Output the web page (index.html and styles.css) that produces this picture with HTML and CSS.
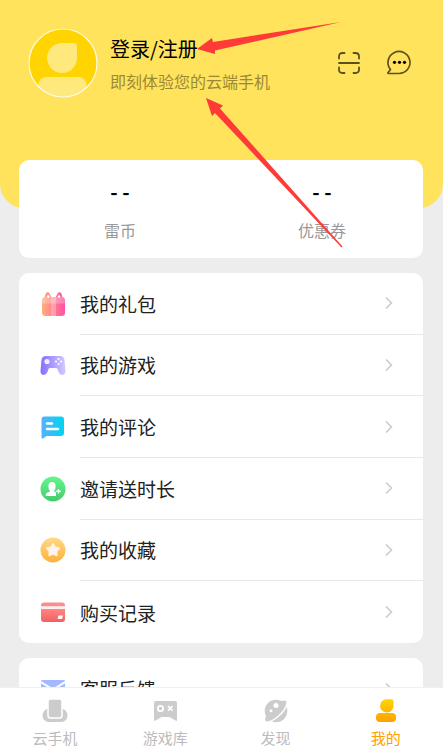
FILE: index.html
```html
<!DOCTYPE html>
<html lang="zh-CN">
<head>
<meta charset="utf-8">
<meta name="viewport" content="width=device-width, initial-scale=1">
<title>我的</title>
<link rel="stylesheet" href="styles.css">
</head>
<body>
<main class="content">
  <header class="profile">
    <svg class="avatar" viewBox="0 0 70 70" aria-hidden="true">
      <defs><clipPath id="face"><circle cx="35" cy="35" r="34"/></clipPath></defs>
      <circle cx="35" cy="35" r="34" fill="#ffd400"/>
      <g clip-path="url(#face)" fill="#ffe87c">
        <path d="M33 15H46Q49 15 49 18V30A15 15 0 1 1 33 15Z"/>
        <rect x="10.500" y="49" width="48" height="30" rx="8"/>
      </g>
      <circle cx="35" cy="35" r="34" fill="none" stroke="#fffbe5" stroke-width="1.2"/>
    </svg>
    <a class="login" href="#login">
      <span class="login-title">登录/注册</span>
      <span class="login-note">即刻体验您的云端手机</span>
    </a>
    <div class="tools">
      <button class="tool" type="button" aria-label="扫一扫">
        <svg viewBox="0 0 24 24" fill="none" stroke="#5c5020" stroke-width="1.8" stroke-linecap="round"><path d="M2 7.500V5.500Q2 2 5.500 2H7.500M16.500 2H18.500Q22 2 22 5.500V7.500M22 16.500V18.500Q22 22 18.500 22H16.500M7.500 22H5.500Q2 22 2 18.500V16.500M2 12H22"/></svg>
      </button>
      <button class="tool" type="button" aria-label="消息">
        <svg viewBox="0 0 24 24"><path d="M12 22.500H1.500Q.5 22.500 1.100 21.500L3.500 18.500A11 11 0 1 1 12 22.500Z" fill="none" stroke="#5c5020" stroke-width="1.700" stroke-linejoin="round"/><g fill="#000"><circle cx="7.500" cy="11.300" r="1.600"/><circle cx="12.500" cy="11.300" r="1.600"/><circle cx="17.500" cy="11.300" r="1.600"/></g></svg>
      </button>
    </div>
  </header>

  <section class="card wallet">
    <a class="balance" href="#coins"><span class="amount">- -</span><span class="unit">雷币</span></a>
    <a class="balance" href="#coupons"><span class="amount">- -</span><span class="unit">优惠券</span></a>
  </section>

  <nav class="card menu">
    <a class="row" href="#gifts">
      <svg class="row-icon" viewBox="0 0 26 26" aria-hidden="true">
        <defs><linearGradient id="gift" x1="2" x2="25" gradientUnits="userSpaceOnUse"><stop stop-color="#ffb07b"/><stop offset="1" stop-color="#ff4fa8"/></linearGradient></defs>
        <path d="M4.500 8Q5 1 8 1Q9.500 1 11.500 7V8ZM15.500 8V7Q17.500 1 19.500 1Q22 1 22.500 8Z" fill="url(#gift)"/>
        <rect x="2" y="6" width="23" height="19" rx="3.500" fill="url(#gift)"/>
        <path d="M2 12.500V9.500Q2 6 5.500 6H21.500Q25 6 25 9.500V12.500Z" fill="#fff" opacity=".25"/>
        <path d="M11 6H16V25H11Z" fill="#fff" opacity=".25"/>
        <circle cx="8.300" cy="5.500" r="1.200" fill="#fff"/><circle cx="19" cy="5.500" r="1.200" fill="#fff"/>
      </svg>
      <span class="row-body">我的礼包<svg class="chevron" viewBox="0 0 8 14"><path d="M1 1.500L6.500 7L1 12.500"/></svg></span>
    </a>
    <a class="row" href="#games">
      <svg class="row-icon" viewBox="0 0 26 26" aria-hidden="true">
        <defs><linearGradient id="pad"><stop stop-color="#8370ff"/><stop offset="1" stop-color="#d5c9ff"/></linearGradient></defs>
        <path d="M6 4H20Q24 4 24.500 8L25.500 19Q25.500 23 22 23Q20 23 18.500 20L17.500 17Q17 16 16 16H10Q9 16 8.500 17L7.500 20Q6 23 4 23Q.5 23 .5 19L1.500 8Q2 4 6 4Z" fill="url(#pad)"/>
        <circle cx="7" cy="9.500" r="2.600" fill="#f1edff"/>
        <g fill="#fff"><circle cx="18.500" cy="7" r="1.100"/><circle cx="18.500" cy="12" r="1.100"/><circle cx="16" cy="9.500" r="1.100"/><circle cx="21" cy="9.500" r="1.100"/></g>
      </svg>
      <span class="row-body">我的游戏<svg class="chevron" viewBox="0 0 8 14"><path d="M1 1.500L6.500 7L1 12.500"/></svg></span>
    </a>
    <a class="row" href="#comments">
      <svg class="row-icon" viewBox="0 0 26 26" aria-hidden="true">
        <defs><linearGradient id="chat"><stop stop-color="#55b1ff"/><stop offset="1" stop-color="#00d5ef"/></linearGradient></defs>
        <path d="M4.500 2.500H21Q24 2.500 24 5.500V19Q24 22 21 22H6.500L3 24.500Q1.500 25 1.500 23V5.500Q1.500 2.500 4.500 2.500Z" fill="url(#chat)"/>
        <path d="M7 9.500H12M7 15H18" stroke="#fff" stroke-width="2.400" stroke-linecap="round"/>
      </svg>
      <span class="row-body">我的评论<svg class="chevron" viewBox="0 0 8 14"><path d="M1 1.500L6.500 7L1 12.500"/></svg></span>
    </a>
    <a class="row" href="#invite">
      <svg class="row-icon" viewBox="0 0 26 26" aria-hidden="true">
        <defs><linearGradient id="invite" x2="0" y2="1"><stop stop-color="#64f78d"/><stop offset="1" stop-color="#43cb6b"/></linearGradient></defs>
        <circle cx="13" cy="13" r="12.500" fill="url(#invite)"/>
        <rect x="8.500" y="6" width="7" height="9" rx="3.500" fill="#fff"/>
        <path d="M10 13H14V15L16 16V20H5.500Q5.500 17 8 16.300L10 15.500Z" fill="#fff"/>
        <path d="M18.500 12.500V18M15.700 15.300H21.300" stroke="#4fd979" stroke-width="3.500"/>
        <path d="M18.500 13V17.500M16.200 15.300H20.800" stroke="#fff" stroke-width="1.500"/>
      </svg>
      <span class="row-body">邀请送时长<svg class="chevron" viewBox="0 0 8 14"><path d="M1 1.500L6.500 7L1 12.500"/></svg></span>
    </a>
    <a class="row" href="#favorites">
      <svg class="row-icon" viewBox="0 0 26 26" aria-hidden="true">
        <defs><linearGradient id="star" x2="0" y2="1"><stop stop-color="#ffd987"/><stop offset="1" stop-color="#ffb03c"/></linearGradient></defs>
        <circle cx="13" cy="13" r="12.500" fill="url(#star)"/>
        <path d="M13 7L15 10.500L19 11.300L16.300 14.300L16.700 18.300L13 16.700L9.300 18.300L9.700 14.300L7 11.300L11 10.500Z" fill="#fff3ea" stroke="#fff3ea" stroke-width="2" stroke-linejoin="round"/>
      </svg>
      <span class="row-body">我的收藏<svg class="chevron" viewBox="0 0 8 14"><path d="M1 1.500L6.500 7L1 12.500"/></svg></span>
    </a>
    <a class="row" href="#purchases">
      <svg class="row-icon" viewBox="0 0 26 26" aria-hidden="true">
        <defs><linearGradient id="bill" x2="0" y2="1"><stop stop-color="#ff8686"/><stop offset="1" stop-color="#f16060"/></linearGradient></defs>
        <path d="M1 7.500V6.500Q1 3.500 4 3.500H22Q25 3.500 25 6.500V7.500Z" fill="#ff8c8c"/>
        <path d="M1 10H25V20Q25 23 22 23H4Q1 23 1 20Z" fill="url(#bill)"/>
        <path d="M1 7.500H25V10H1Z" fill="#fff0f0"/>
        <path d="M18.500 16.500H23L22 20H17.500Z" fill="#fff"/>
      </svg>
      <span class="row-body">购买记录<svg class="chevron" viewBox="0 0 8 14"><path d="M1 1.500L6.500 7L1 12.500"/></svg></span>
    </a>
  </nav>

  <nav class="card support">
    <a class="row" href="#feedback">
      <svg class="row-icon" viewBox="0 0 26 26" aria-hidden="true">
        <rect x="1" y="4" width="24" height="19" rx="1" fill="#a4b8ff"/>
        <path d="M0 5.500L13 13.500L26 5.500" fill="none" stroke="#fff" stroke-width="2"/>
      </svg>
      <span class="row-body">客服反馈<svg class="chevron" viewBox="0 0 8 14"><path d="M1 1.500L6.500 7L1 12.500"/></svg></span>
    </a>
  </nav>

  <svg class="pointers" width="443" height="260" viewBox="0 0 443 260" fill="#ff3b38" aria-hidden="true">
    <path d="M197 49L212 38L213 42L341 22L215 50.500L215 54Z"/>
    <path d="M206 98L223 105.500L220 108.500L342.500 246.500L341.500 247.500L215 113L212 116Z"/>
  </svg>
</main>

<nav class="tabs">
  <a class="tab" href="#phone">
    <svg class="tab-icon" viewBox="0 0 26 26" aria-hidden="true"><path d="M6 10.500Q1 12 .5 17Q.5 23.500 7 24H19Q25.500 23.500 25.500 17Q25 12 20 10.500Z" fill="#ccc"/><rect x="6" y="1" width="14" height="19" rx="2.500" fill="#ccc" stroke="#fff" stroke-width="1.500"/></svg>
    <span>云手机</span>
  </a>
  <a class="tab" href="#library">
    <svg class="tab-icon" viewBox="0 0 26 26" aria-hidden="true"><path d="M4 3H23Q25 3 25 5V22Q25 23.500 23.500 22.500L17.500 19H9.500L3.500 22.500Q2 23.500 2 22V5Q2 3 4 3Z" fill="#ccc"/><circle cx="8.500" cy="10.500" r="2.700" fill="none" stroke="#fff" stroke-width="1.800"/><path d="M16 8L20.500 12.700M20.500 8L16 12.700" stroke="#fff" stroke-width="1.800"/></svg>
    <span>游戏库</span>
  </a>
  <a class="tab" href="#discover">
    <svg class="tab-icon" viewBox="0 0 26 26" aria-hidden="true"><circle cx="13" cy="13" r="11.300" fill="#ccc"/><path d="M19 3Q23 1.500 23.500 4Q24 9 16 17Q7 25 3 23.500Q1.500 22 3 18Z" fill="#ccc"/><path d="M24.500 5Q22 13 15 18.500Q9 23.500 4 24.500" fill="none" stroke="#fff" stroke-width="1.500"/><circle cx="13" cy="7.500" r="2.500" fill="#fff"/><circle cx="8" cy="12.800" r="1.500" fill="#fff"/></svg>
    <span>发现</span>
  </a>
  <a class="tab tab-active" href="#me" aria-current="page">
    <svg class="tab-icon" viewBox="0 0 26 26" aria-hidden="true"><defs><linearGradient id="me" x2="0" y2="24" gradientUnits="userSpaceOnUse"><stop stop-color="#ffd800"/><stop offset="1" stop-color="#ffa000"/></linearGradient></defs><path d="M13.500 1.200H18.500Q20.500 1.200 20.500 3.200V7.700A6.700 6.700 0 1 1 13.500 1.200Z" fill="url(#me)"/><rect x="3" y="15" width="20" height="9" rx="4" fill="url(#me)"/></svg>
    <span>我的</span>
  </a>
</nav>
</body>
</html>
```
FILE: styles.css
```css
* {
  box-sizing: border-box;
}

body {
  display: flex;
  flex-direction: column;
  height: 100vh;
  margin: 0;
  background: #ededed;
  color: #222;
  font-family: "Noto Sans CJK SC", sans-serif;
}

a {
  color: inherit;
  text-decoration: none;
}

.content {
  position: relative;
  flex: 1;
  min-height: 0;
  overflow-x: hidden;
  overflow-y: auto;
  scrollbar-width: none;
}

.profile {
  display: flex;
  align-items: flex-start;
  height: 208px;
  padding: 28px 32px 0 28px;
  border-radius: 0 0 24px 24px;
  background: #ffe35c;
}

.avatar {
  flex: none;
  width: 70px;
  height: 70px;
}

.login {
  display: flex;
  flex: 1;
  flex-direction: column;
  gap: 6px;
  padding: 7px 0 0 12px;
  white-space: nowrap;
}

.login-title {
  color: #000;
  font-size: 20px;
  line-height: 28px;
}

.login-note {
  color: #9b8938;
  font-size: 16px;
  line-height: 24px;
}

.tools {
  display: flex;
  gap: 26px;
  padding-top: 23px;
}

.tool {
  width: 24px;
  height: 24px;
  padding: 0;
  border: 0;
  background: none;
}

.tool svg {
  display: block;
  overflow: visible;
}

.card {
  margin: 0 20px 15px 19px;
  border-radius: 10px;
  background: #fff;
}

.wallet {
  position: relative;
  display: grid;
  grid-template-columns: 1fr 1fr;
  margin-top: -48px;
  padding: 18px 0 16px;
}

.balance {
  display: flex;
  flex-direction: column;
  align-items: center;
  gap: 12px;
}

.amount {
  color: #000;
  font-size: 20px;
  font-weight: 700;
  line-height: 28px;
}

.unit {
  color: #999;
  font-size: 16px;
  line-height: 24px;
}

.menu {
  display: grid;
  grid-auto-rows: 1fr;
  min-height: 370px;
}

.row {
  display: flex;
  align-items: center;
  gap: 14px;
  min-height: 61px;
  padding-left: 21px;
}

.row-icon {
  flex: none;
  width: 26px;
  height: 26px;
}

.row-body {
  display: flex;
  flex: 1;
  align-items: center;
  align-self: stretch;
  justify-content: space-between;
  padding-right: 30px;
  border-bottom: 1px solid #e8e8e8;
  font-size: 19px;
}

.row:last-child .row-body {
  border-bottom: 0;
}

.chevron {
  width: 8px;
  height: 14px;
  fill: none;
  stroke: #ccc;
  stroke-width: 1.6;
}

.pointers {
  position: absolute;
  top: 0;
  left: 0;
  pointer-events: none;
}

.tabs {
  display: grid;
  grid-template-columns: repeat(4, 1fr);
  padding: 10px 2px 7px 0;
  border-top: 1px solid #f0f0f0;
  background: #fff;
}

.tab {
  display: flex;
  flex-direction: column;
  align-items: center;
  gap: 3px;
  color: #bbb;
  font-size: 15px;
  line-height: 22px;
}

.tab-active {
  color: #ffa000;
}

.tab-icon {
  width: 26px;
  height: 26px;
}
```
